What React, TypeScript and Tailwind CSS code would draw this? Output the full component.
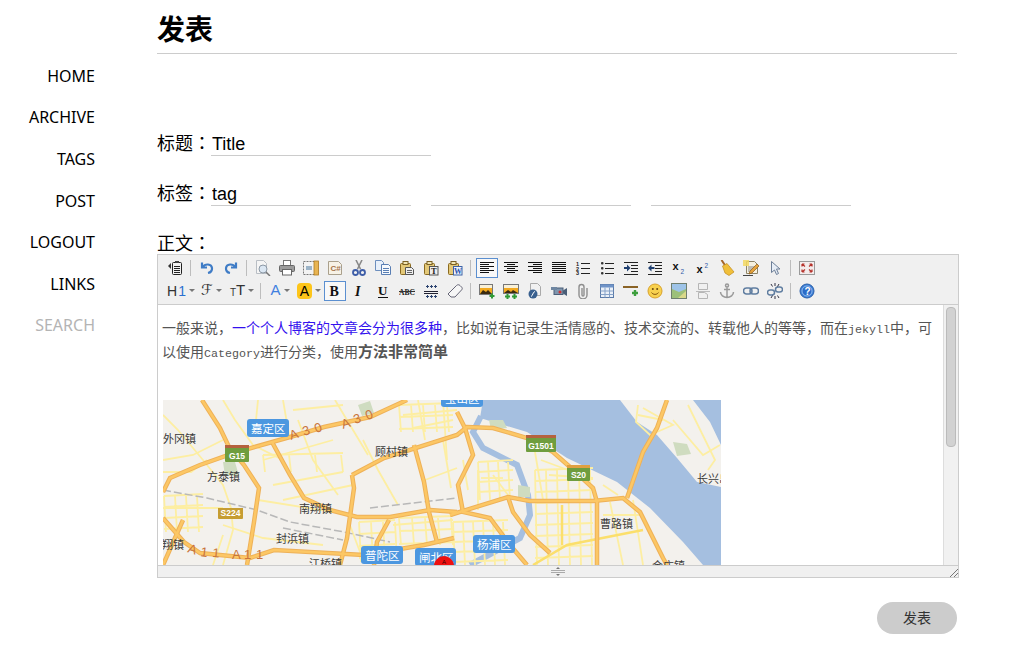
import type { ReactNode } from "react";

const navItems = ["HOME", "ARCHIVE", "TAGS", "POST", "LOGOUT", "LINKS"];

const line = (x: number, y: number, w: number, c = "#222") => <rect x={x} y={y} width={w} height="1" fill={c} />;

const justify = (rows: [number, number][]) => <>{rows.map(([x, w], i) => <rect key={i} x={x} y={2 + i * 2} width={w} height="1" fill="#111" />)}</>;

const pasteBase = (
  <>
    <rect x="1.5" y="3.5" width="10" height="11" rx="1" fill="#e3c878" stroke="#8a6a20" />
    <rect x="4" y="1.5" width="5" height="3" fill="#f2e6b4" stroke="#7a6024" />
  </>
);

const icons: Record<string, ReactNode> = {
  source: (
    <>
      <path d="M1 6l3-3v6z" fill="#333" />
      <rect x="5.5" y="2.5" width="9" height="12" rx="1" fill="#f2f2f2" stroke="#222" />
      <rect x="8" y="1" width="4" height="2" fill="#444" />
      {line(7, 6, 6)}{line(7, 8, 6)}{line(7, 10, 6)}{line(7, 12, 6)}
    </>
  ),
  undo: <path d="M3 2.5v5h5M3.5 7C6 3.5 12.5 3.5 13 8c.2 2.5-1.5 4.500-4 5" fill="none" stroke="#3f7cc6" strokeWidth="2.2" />,
  redo: <path d="M13 2.5v5H8M12.5 7C10 3.5 3.5 3.5 3 8c-.2 2.5 1.5 4.5 4 5" fill="none" stroke="#3f7cc6" strokeWidth="2.2" />,
  preview: (
    <>
      <path d="M1.5 .5h7l3 3v10h-10z" fill="#f5f5f5" stroke="#b9bec4" />
      <circle cx="8" cy="9" r="4" fill="#dbe7f3" stroke="#8c98a5" />
      <path d="M11 12l4 4" stroke="#777" strokeWidth="1.5" />
    </>
  ),
  print: (
    <>
      <rect x="4.5" y=".5" width="7" height="5" fill="#fff" stroke="#777" />
      <rect x=".5" y="5.5" width="15" height="6" rx="1" fill="#9b9b9b" stroke="#666" />
      <rect x="3.5" y="9.5" width="9" height="5.5" fill="#fff" stroke="#666" />
    </>
  ),
  template: (
    <>
      <rect x=".5" y="1.5" width="11" height="13" fill="#f3f3f3" stroke="#777" strokeDasharray="2 1" />
      <rect x="3" y="6" width="6" height="4" fill="#9cb4c8" />
      <rect x="11" y="1" width="4.5" height="14" fill="#e8b452" stroke="#b07b20" strokeWidth=".8" />
    </>
  ),
  code: (
    <>
      <path d="M1.5 1.5h10l3 3v10h-13z" fill="#f7f2e6" stroke="#aaa08c" />
      <text x="3.5" y="10.5" fontSize="8" fontWeight="700" fill="#a5714a" fontFamily="Liberation Sans">C#</text>
    </>
  ),
  cut: (
    <>
      <path d="M5 0l4.5 9M11 0L6.5 9" stroke="#8a8a8a" strokeWidth="1.6" />
      <circle cx="4.5" cy="12.5" r="2.5" fill="none" stroke="#3e5ea8" strokeWidth="1.8" />
      <circle cx="11.5" cy="12.5" r="2.5" fill="none" stroke="#3e5ea8" strokeWidth="1.8" />
    </>
  ),
  copy: (
    <>
      <path d="M.5 .5h6l2 2v8h-8z" fill="#e8f0fa" stroke="#6d8fbe" />
      <path d="M6.5 4.5h7l2 2v8h-9z" fill="#f6f9fd" stroke="#5a7fb4" />
      <path d="M8 8.5h6M8 10.500h6M8 12.5h6" stroke="#5a7fb4" />
    </>
  ),
  paste: <>{pasteBase}<path d="M6.5 7.5h6l2 2v5h-8z" fill="#eee" stroke="#555" /><path d="M8 10.5h5M8 12.5h5" stroke="#666" /></>,
  pasteText: <>{pasteBase}<rect x="6.5" y="6.5" width="8.5" height="8.5" fill="#eee" stroke="#555" /><text x="8" y="14" fontSize="8.5" fontWeight="700" fill="#222" fontFamily="Liberation Serif">T</text></>,
  pasteWord: <>{pasteBase}<rect x="6.5" y="6.5" width="8.5" height="8.5" fill="#eef3fb" stroke="#3c62a8" /><text x="7" y="14" fontSize="8" fontWeight="700" fill="#2a55b0" fontFamily="Liberation Serif">W</text></>,
  left: justify([[1, 14], [1, 9], [1, 14], [1, 9], [1, 14], [1, 9]]),
  center: justify([[1, 14], [4, 8], [1, 14], [4, 8], [1, 14], [4, 8]]),
  right: justify([[1, 14], [6, 9], [1, 14], [6, 9], [1, 14], [6, 9]]),
  full: justify([[1, 14], [1, 14], [1, 14], [1, 14], [1, 14], [1, 14]]),
  ol: (
    <>
      <text x="1" y="6" fontSize="5.5" fontWeight="700" fill="#222" fontFamily="Liberation Sans">1</text>
      <text x="1" y="10.5" fontSize="5.5" fontWeight="700" fill="#222" fontFamily="Liberation Sans">2</text>
      <text x="1" y="15" fontSize="5.5" fontWeight="700" fill="#222" fontFamily="Liberation Sans">3</text>
      {line(6, 3, 9)}{line(6, 8, 9)}{line(6, 13, 9)}
    </>
  ),
  ul: (
    <>
      <rect x="2" y="2" width="2.5" height="2.5" rx="1" fill="#333" />
      <rect x="2" y="7" width="2.5" height="2.5" rx="1" fill="#333" />
      <rect x="2" y="12" width="2.5" height="2.5" rx="1" fill="#333" />
      {line(6, 3, 9)}{line(6, 8, 9)}{line(6, 13, 9)}
    </>
  ),
  indent: <>{line(1, 2, 14)}{line(8, 5, 7)}{line(8, 8, 7)}{line(8, 11, 7)}{line(1, 14, 14)}<path d="M1 7h3V4.5L7.5 8 4 11.5V9H1z" fill="#1f3f70" /></>,
  outdent: <>{line(1, 2, 14)}{line(8, 5, 7)}{line(8, 8, 7)}{line(8, 11, 7)}{line(1, 14, 14)}<path d="M7.5 7h-3V4.5L1 8l3.5 3.5V9h3z" fill="#1f3f70" /></>,
  sub: <><text x="1.5" y="10" fontSize="11" fontWeight="700" fill="#111" fontFamily="Liberation Sans">x</text><text x="9.5" y="14" fontSize="6.5" fill="#2d5aa8" fontFamily="Liberation Sans">2</text></>,
  sup: <><text x="1.5" y="13" fontSize="11" fontWeight="700" fill="#111" fontFamily="Liberation Sans">x</text><text x="9.5" y="8" fontSize="6.5" fill="#2d5aa8" fontFamily="Liberation Sans">2</text></>,
  clean: (
    <>
      <path d="M2.5 0l4 6" stroke="#a5662a" strokeWidth="2" />
      <path d="M3.5 6L8 3.5l7 8.500-5 3.500-4-2.500z" fill="#f0bf3a" stroke="#c08a1c" strokeWidth=".7" />
    </>
  ),
  selectAll: (
    <>
      <path d="M3.5 1.500h8l3 3v9h-11z" fill="#f5f0df" stroke="#8d8468" />
      <rect x="0" y="0" width="6" height="6" fill="#f3d860" opacity=".85" />
      <path d="M5 7h7M5 9h7M5 11h4" stroke="#888" />
      <path d="M6 14l1-3 7-7 2 2-7 7z" fill="#e5a33c" stroke="#8a5a1c" strokeWidth=".7" />
      {line(0, 15, 10, "#444")}
    </>
  ),
  cursor: <path d="M4.5 1.5v11l3-2.5 2 4.5 2-1-2-4.5h3.5z" fill="#e6edf6" stroke="#6d7f98" />,
  fullscreen: (
    <>
      <rect x=".5" y="1.5" width="15" height="13" fill="#f3ecec" stroke="#9a9a9a" />
      <path d="M3 4l3 2.5M3 4h2.5M3 4v2.5M13 4l-3 2.5M13 4h-2.500M13 4v2.5M3 12l3-2.5M3 12h2.5M3 12V9.500M13 12l-3-2.5M13 12h-2.5M13 12V9.5" stroke="#b5312a" strokeWidth="1.2" fill="none" />
    </>
  ),
  bold: <text x="2.5" y="13" fontSize="14" fontWeight="700" fill="#111" fontFamily="Liberation Serif">B</text>,
  italic: <text x="4" y="13" fontSize="14" fontWeight="700" fontStyle="italic" fill="#111" fontFamily="Liberation Serif">I</text>,
  underline: <><text x="3" y="12" fontSize="13" fontWeight="700" fill="#111" fontFamily="Liberation Serif">U</text>{line(3, 14, 10, "#111")}</>,
  strike: <><text x="0" y="11.5" fontSize="7.5" fontWeight="700" fill="#222" fontFamily="Liberation Serif">ABC</text>{line(0, 8, 16, "#333")}</>,
  ruler: (
    <>
      {line(1, 8, 14, "#223")}{line(1, 10, 14, "#223")}
      <path d="M3 3.500h3M4.500 2v3M8 3.500h0M7 3.500h3M8.500 2v3M11 3.500h3M12.500 2v3M3 13.500h3M4.500 12v3M7 13.500h3M8.500 12v3M11 13.500h3M12.500 12v3" stroke="#2d4470" />
    </>
  ),
  eraser: <path d="M1 11l8.500-8.500c1-1 2.500-1 3.500 0l1.500 1.500c1 1 1 2 0 3L8 14H4z" fill="#f6f6f6" stroke="#667" />,
  image: (
    <>
      <rect x=".5" y="1.5" width="13" height="10" fill="#f2a91f" stroke="#777" />
      <rect x="1" y="2" width="12" height="3" fill="#f8f0d8" />
      <path d="M1 11l3-4 3 2 2-2 4 4z" fill="#3a2a10" />
      <path d="M10.500 13h5M13 10.500v5" stroke="#2f9a36" strokeWidth="2" />
    </>
  ),
  multiImage: (
    <>
      <rect x=".5" y="1.5" width="15" height="9" fill="#f2a91f" stroke="#777" />
      <rect x="1" y="2" width="14" height="3" fill="#f8f0d8" />
      <path d="M1 10l4-3 3 2 2-2 5 3z" fill="#3a2a10" />
      <path d="M2 13.500h5M4.500 11v5M9 13.500h5M11.500 11v5" stroke="#2f9a36" strokeWidth="2" />
    </>
  ),
  flash: (
    <>
      <path d="M3.500 .5h7l3 3v9h-10z" fill="#f1f1f1" stroke="#aaa" />
      <circle cx="6" cy="11" r="4.500" fill="#39608f" />
      <path d="M4 13.500c2-.5 1.500-4.500 4-5" stroke="#fff" fill="none" />
    </>
  ),
  video: (
    <>
      <rect x="3" y="5" width="9" height="6.500" fill="#7f95ad" stroke="#4a5e78" />
      <rect x="0" y="4" width="6" height="3" fill="#6f87a2" />
      <circle cx="9" cy="9" r="1.500" fill="#c33" />
      <path d="M12 7.500l4-2.500v8l-4-2.500z" fill="#4a5e78" />
    </>
  ),
  attach: <path d="M12 5v7a4 4 0 01-8 0V4a2.500 2.500 0 015 0v8a1 1 0 01-2 0V5" fill="none" stroke="#8e8e8e" strokeWidth="1.400" />,
  table: (
    <>
      <rect x="1.500" y="1.500" width="13" height="13" fill="#eaf0f8" stroke="#5a7aa8" />
      <rect x="1.500" y="1.500" width="13" height="3" fill="#6f93c8" />
      <path d="M6 4.500v10M10.500 4.500v10M1.500 8h13M1.500 11.500h13" stroke="#86a2c8" />
    </>
  ),
  hr: <><rect x="0" y="3" width="15" height="2" fill="#8a6326" /><path d="M12 7v6M9 10h6" stroke="#3c9e3c" strokeWidth="2.400" /></>,
  smile: (
    <>
      <circle cx="8" cy="8" r="7" fill="#f8d14e" stroke="#d9a22c" />
      <circle cx="5.800" cy="6" r="1" fill="#6a4a10" />
      <circle cx="10.200" cy="6" r="1" fill="#6a4a10" />
      <path d="M4.500 9.500c1.500 2.500 5.500 2.500 7 0" fill="none" stroke="#8a5a10" />
    </>
  ),
  map: (
    <>
      <rect x=".5" y=".5" width="15" height="15" fill="#9cc07a" stroke="#6f7f6f" />
      <path d="M1 1h14v5L8 9 1 6z" fill="#9ec4e8" />
      <path d="M7 15l8-7v7z" fill="#d9d98a" />
    </>
  ),
  pageBreak: (
    <>
      <path d="M3.500 .5h9v6h-9z" fill="#f0f0f0" stroke="#b5b5b5" />
      <path d="M3.500 9.500h6l3 2v4h-9z" fill="#f0f0f0" stroke="#b5b5b5" />
      {line(1, 8, 14, "#bbb")}
    </>
  ),
  anchor: <path d="M8 4v10M5 6.500h6M1.500 9c0 3 3 5.500 6.500 5.500s6.500-2.500 6.500-5.500M8 1a1.500 1.500 0 100 3 1.500 1.500 0 000-3z" fill="none" stroke="#9a9a9a" strokeWidth="1.500" />,
  link: (
    <>
      <rect x=".5" y="5" width="8.500" height="6" rx="3" fill="none" stroke="#5f7da0" strokeWidth="1.500" />
      <rect x="7" y="5" width="8.500" height="6" rx="3" fill="none" stroke="#5f7da0" strokeWidth="1.500" />
    </>
  ),
  unlink: (
    <>
      <rect x=".5" y="7" width="7" height="5" rx="2.500" fill="none" stroke="#5f7da0" strokeWidth="1.500" />
      <rect x="8.500" y="4" width="7" height="5" rx="2.500" fill="none" stroke="#5f7da0" strokeWidth="1.500" />
      <path d="M8 0v3M4 1l1.500 2.500M12 1l-1.500 2.500M8 13v3M4 15l1.500-2.500M12 15l-1.500-2.500" stroke="#334" />
    </>
  ),
  help: (
    <>
      <circle cx="8" cy="8" r="7" fill="#3b80d8" stroke="#2b5ea8" />
      <circle cx="8" cy="8" r="5" fill="#2a6bc8" stroke="#a8c8f0" strokeWidth=".8" />
      <text x="5.500" y="11.500" fontSize="10" fontWeight="700" fill="#fff" fontFamily="Liberation Sans">?</text>
    </>
  ),
};

const Tool = ({ name, active }: { name: string; active?: boolean }) => (
  <div className="w-6 h-[23px] flex items-center justify-center">
    <div className={active ? "w-[22px] h-5 flex items-center justify-center border border-[#5b8fd0] bg-[#f8f8f8]" : "w-[22px] h-5 flex items-center justify-center"}>
      <svg width="16" height="16" viewBox="0 0 16 16">{icons[name]}</svg>
    </div>
  </div>
);

const Sep = () => (
  <div className="w-2 h-[23px] flex items-center pl-[3px]">
    <div className="w-px h-4 bg-[#bdbdbd]" />
  </div>
);

const Caret = () => <span className="ml-[3px] border-x-[3px] border-t-[3px] border-x-transparent border-t-[#777]" />;

const row1 = [
  ["source"], ["undo", "redo"],
  ["preview", "print", "template", "code", "cut", "copy", "paste", "pasteText", "pasteWord"],
  ["left", "center", "right", "full", "ol", "ul", "indent", "outdent", "sub", "sup", "clean", "selectAll", "cursor"],
  ["fullscreen"],
];

const row2a = ["bold", "italic", "underline", "strike", "ruler", "eraser"];
const row2b = ["image", "multiImage", "flash", "video", "attach", "table", "hr", "smile", "map", "pageBreak", "anchor", "link", "unlink"];

const majorRoads = [
  "M0 92L7 78 37 65 74 52 127 37 161 27 207 17 244 0",
  "M39 0L57 28 66 47 81 65 96 88 91 122 84 165",
  "M109 42L127 75 141 98 167 110 194 117 227 117 267 110 294 112",
  "M189 75L191 88 184 138 177 165",
  "M189 75L221 58 294 35 304 27 330 28 364 38 390 52 407 67 430 88 434 102 434 165",
  "M251 45L261 82 266 112 274 142",
  "M226 120L214 142 211 165",
  "M0 118L21 142 37 153 87 158 111 150 201 155 261 145 291 138",
  "M504 0L494 28 480 52 464 98",
  "M287 115L345 97 367 101 430 101 460 98 477 112 500 158 504 165",
  "M294 12L302 28 310 55 295 85 300 112 327 118 347 145 364 165",
  "M345 97L350 112 367 135 387 153",
  "M0 165L20 120",
];

// street grid of a built-up area
const grid = (x0: number, y0: number, x1: number, y1: number, step: number) => {
  const parts: string[] = [];
  for (let x = x0; x <= x1; x += step) parts.push(`M${x} ${y0}L${x + 2} ${y1}`);
  for (let y = y0; y <= y1; y += step) parts.push(`M${x0} ${y}L${x1} ${y - 2}`);
  return parts.join("");
};

const minorRoads = [
  "M0 15L15 30 40 60 60 85 68 108 70 130 60 165", "M0 60L30 55 60 40", "M0 72L28 72 44 60",
  "M60 0L72 20 90 45 120 60", "M95 0L92 30", "M120 0L126 35", "M130 10L180 5", "M135 20L150 60 175 95",
  "M100 60L170 40", "M110 85L180 72", "M120 100L190 85", "M172 0L205 55", "M200 40L215 70 235 105",
  "M240 15L294 10", "M250 28L290 20", "M255 0L262 40", "M280 0L284 60", "M262 80L294 68", "M280 40L288 88",
  "M0 108L60 108", "M60 125L100 138 160 145", "M60 135L50 165", "M95 100L170 112", "M185 120L200 160",
  "M230 125L290 120", "M300 60L305 90", "M315 70L315 110", "M330 75L345 95", "M318 78L340 78",
  "M370 40L380 100", "M378 60L405 70", "M386 75L430 78", "M440 85L455 95", "M447 102L460 165", "M470 100L480 165",
  "M440 115L480 115", "M475 15L500 20", "M475 5L473 22 487 35 510 25 480 8", "M510 20L540 55 557 45", "M525 5L552 60 545 70",
  grid(1, 96, 40, 132, 11),
  grid(236, 5, 290, 32, 12),
  grid(196, 122, 232, 162, 12),
  grid(236, 118, 290, 145, 13),
  grid(290, 122, 345, 165, 10),
  grid(315, 62, 350, 100, 10),
  grid(372, 70, 430, 165, 11),
  grid(100, 55, 180, 72, 26),
];

const thickStreets = ["M370 165L404 145 480 130", "M399 105L399 145"];

const railway = ["M0 90L44 98 94 110 127 122 181 132 227 142", "M207 108L294 98", "M120 128L180 140"];

const places: [string, number, number][] = [
  ["外冈镇", 0, 43], ["方泰镇", 44, 81], ["顾村镇", 212, 56], ["南翔镇", 136, 113], ["封浜镇", 113, 143],
  ["江桥镇", 146, 168], ["翔镇", -1, 149], ["曹路镇", 437, 128], ["长兴岛", 534, 83], ["金庄镇", 489, 170],
];

const districts: [string, number, number, number][] = [
  ["嘉定区", 84, 19, 42], ["普陀区", 198, 146, 42], ["闸北区", 252, 148, 41], ["杨浦区", 310, 135, 42], ["宝山区", 278, -11, 42],
];

const shields: [string, number, number, number, number, string, string][] = [
  ["G15", 62, 45, 24, 17, "#6f9d3e", "#b5623e"],
  ["S224", 55, 108, 25, 11, "#c69d32", "#c69d32"],
  ["G1501", 363, 35, 30, 17, "#6f9d3e", "#b5623e"],
  ["S20", 404, 65, 23, 16, "#6f9d3e", "#e0a040"],
];

const roadLetters: [string, number, number, number][] = [
  ["A", 128, 40, -18], ["3", 141, 36, -18], ["0", 153, 33, -18], ["A", 180, 29, -18], ["3", 192, 24, -18], ["0", 204, 20, -18],
  ["A", 24, 152, 18], ["1", 37, 156, 8], ["1", 49, 157, 5], ["A", 69, 159, 0], ["1", 81, 159, 0], ["1", 93, 159, 0],
];

const MapImage = () => (
  <svg width="558" height="165" viewBox="0 0 558 165" className="block" fontFamily="Liberation Sans, Noto Sans CJK SC, sans-serif">
    <rect width="558" height="165" fill="#f3f1ed" />
    <path d="M320 0L317 18 364 32 404 58 454 82 487 108 520 142 540 165 558 165 558 87 534 82 514 58 494 35 474 22 457 0z" fill="#a5bfe0" />
    <path d="M530 0H558V45L547 22z" fill="#a5bfe0" />
    <path d="M318 16L310 32 320 48 354 65 365 95 367 115 357 138 320 158 307 165" fill="none" stroke="#a5bfe0" strokeWidth="6" />
    <path d="M60 62l12 0 4 14-14 0zM195 5l12-4 4 12-12 3zM326 20l14 0 4 8-16 2zM355 85l12 2 0 10-12 0zM510 42l14 2 4 10-14 2z" fill="#cfdcc0" />
    {minorRoads.map((d, i) => <path key={i} d={d} fill="none" stroke="#fdeea2" strokeWidth="1.8" />)}
    {thickStreets.map((d, i) => <path key={i} d={d} fill="none" stroke="#fbdf6c" strokeWidth="2.5" />)}
    {railway.map((d, i) => <path key={i} d={d} fill="none" stroke="#b8b8b8" strokeWidth="1.5" strokeDasharray="8 3" />)}
    {majorRoads.map((d, i) => <path key={i} d={d} fill="none" stroke="#eeb158" strokeWidth="4.5" />)}
    {majorRoads.map((d, i) => <path key={i} d={d} fill="none" stroke="#fcc765" strokeWidth="2.5" />)}
    {roadLetters.map(([t, x, y, r], i) => (
      <text key={i} x={x} y={y} fontSize="13" fill="#c9743a" transform={`rotate(${r} ${x} ${y})`}>{t}</text>
    ))}
    {places.map(([t, x, y]) => <text key={t} x={x} y={y} fontSize="11" fill="#3a3a3a">{t}</text>)}
    {districts.map(([t, x, y, w]) => (
      <g key={t}>
        <rect x={x} y={y} width={w} height="18" rx="3" fill="#4c97e0" />
        <text x={x + 4} y={y + 13.5} fontSize="11.5" fill="#fff">{t}</text>
      </g>
    ))}
    {shields.map(([t, x, y, w, h, fill, top]) => (
      <g key={t}>
        <rect x={x} y={y} width={w} height={h} rx="1" fill={fill} />
        <rect x={x} y={y} width={w} height="3" fill={top} />
        <text x={x + w / 2} y={y + h - 3} fontSize="8.5" fontWeight="700" fill="#fff" textAnchor="middle">{t}</text>
      </g>
    ))}
    <circle cx="281" cy="166" r="10" fill="#ee1111" />
    <text x="279" y="164" fontSize="6" fill="#300">A</text>
  </svg>
);

const App = () => {
  return (
    <div className="w-[1012px] h-[656px] overflow-hidden bg-white flex font-['Liberation_Sans','Noto_Sans_CJK_SC',sans-serif] text-black">
      <nav className="w-[95px] pt-[55px] flex flex-col items-end text-base font-['Noto_Sans',sans-serif]">
        {navItems.map((item) => (
          <a key={item} className="h-[41.6px] flex items-center">{item}</a>
        ))}
        <a className="h-[41.6px] flex items-center text-[#b4b4b4]">SEARCH</a>
      </nav>

      <main className="ml-[62px] w-[800px]">
        <h1 className="h-[54px] border-b border-[#ccc] text-[28px] leading-[62px] font-bold">发表</h1>

        <div className="mt-[74px] h-7 flex items-end text-lg">
          <label className="leading-6">标题<span className="font-['Noto_Sans_CJK_TC',sans-serif]">：</span></label>
          <input defaultValue="Title" className="w-[220px] h-6 pl-px border-b border-[#ccc] outline-none" />
        </div>

        <div className="mt-[22px] h-7 flex items-end text-lg">
          <label className="leading-6">标签<span className="font-['Noto_Sans_CJK_TC',sans-serif]">：</span></label>
          <div className="flex gap-5">
            <input defaultValue="tag" className="w-[200px] h-6 pl-px border-b border-[#ccc] outline-none" />
            <input className="w-[200px] h-6 border-b border-[#ccc] outline-none" />
            <input className="w-[200px] h-6 border-b border-[#ccc] outline-none" />
          </div>
        </div>

        <div className="h-12 flex items-end text-lg leading-5">
          <label>正文<span className="font-['Noto_Sans_CJK_TC',sans-serif]">：</span></label>
        </div>

        <div className="w-[802px] border border-[#ccc]">
          <div className="h-[50px] bg-[#f0f0f0] border-b border-[#ccc] pl-[5px] pt-px">
            <div className="flex">
              {row1.map((group, i) => (
                <div key={i} className="flex">
                  {i > 0 && <Sep />}
                  {group.map((name) => <Tool key={name} name={name} active={name === "left"} />)}
                </div>
              ))}
            </div>
            <div className="flex">
              <div className="w-[30px] h-[23px] pl-1 flex items-center text-sm text-[#333]">
                H<span className="ml-px text-[#2a6fd0]">1</span><Caret />
              </div>
              <div className="w-[31px] h-[23px] pl-2 flex items-center text-[15px] text-[#333] font-['DejaVu_Sans',sans-serif]">
                ℱ<Caret />
              </div>
              <div className="w-[33px] h-[23px] pl-[6px] flex items-center text-[#333]">
                <span className="text-[10px] mt-[3px]">T</span><span className="text-[15px]">T</span><Caret />
              </div>
              <Sep />
              <div className="w-[30px] h-[23px] flex items-center justify-center text-[15px] text-[#3f7fe0]">
                A<Caret />
              </div>
              <div className="w-7 h-[23px] flex items-center justify-center text-sm">
                <span className="w-[15px] h-4 rounded-sm bg-[#fdc51a] flex items-center justify-center">A</span><Caret />
              </div>
              {row2a.map((name) => <Tool key={name} name={name} active={name === "bold"} />)}
              <Sep />
              {row2b.map((name) => <Tool key={name} name={name} />)}
              <Sep />
              <Tool name="help" />
            </div>
          </div>

          <div className="h-[260px] flex overflow-hidden bg-white">
            <div className="flex-1 min-w-0 pl-1 pr-[3px] pt-[11px] text-sm leading-6 text-[#555]">
              <p>
                一般来说，<span className="text-[#3311ee]">一个个人博客的文章会分为很多种</span>，比如说有记录生活情感的、技术交流的、转载他人的等等，而在<span className="leading-none font-['Liberation_Mono',monospace] text-[11.67px]">jekyll</span>中，可以使用<span className="leading-none font-['Liberation_Mono',monospace] text-[11.67px]">Category</span>进行分类，使用<strong className="leading-none text-[15px]">方法非常简单</strong>
              </p>
              <div className="mt-9 ml-px">
                <MapImage />
              </div>
            </div>
            <div className="w-[15px] shrink-0 bg-[#f1f1f1] border-l border-[#ddd] pt-0.5 pl-0.5">
              <div className="w-[10px] h-[140px] bg-[#d2d2d2] border border-[#bbb] rounded-sm" />
            </div>
          </div>

          <div className="h-3 border-t border-[#ccc] bg-[#f0f0f0] flex items-center justify-center relative">
            <svg width="14" height="9" viewBox="0 0 14 9" className="ml-[-1px]">
              <path d="M0 3.5h14M0 5.5h14" stroke="#aaa" />
              <path d="M5 2h4L7 0zM5 7h4L7 9z" fill="#777" />
            </svg>
            <svg width="9" height="8" viewBox="0 0 9 8" className="absolute right-0 bottom-0">
              <path d="M1 8L9 0M5 8L9 4" stroke="#777" />
            </svg>
          </div>
        </div>

        <div className="mt-6 flex justify-end">
          <button className="w-20 h-8 rounded-full bg-[#ccc] text-sm text-[#333]">发表</button>
        </div>
      </main>
    </div>
  );
};

export default App;
